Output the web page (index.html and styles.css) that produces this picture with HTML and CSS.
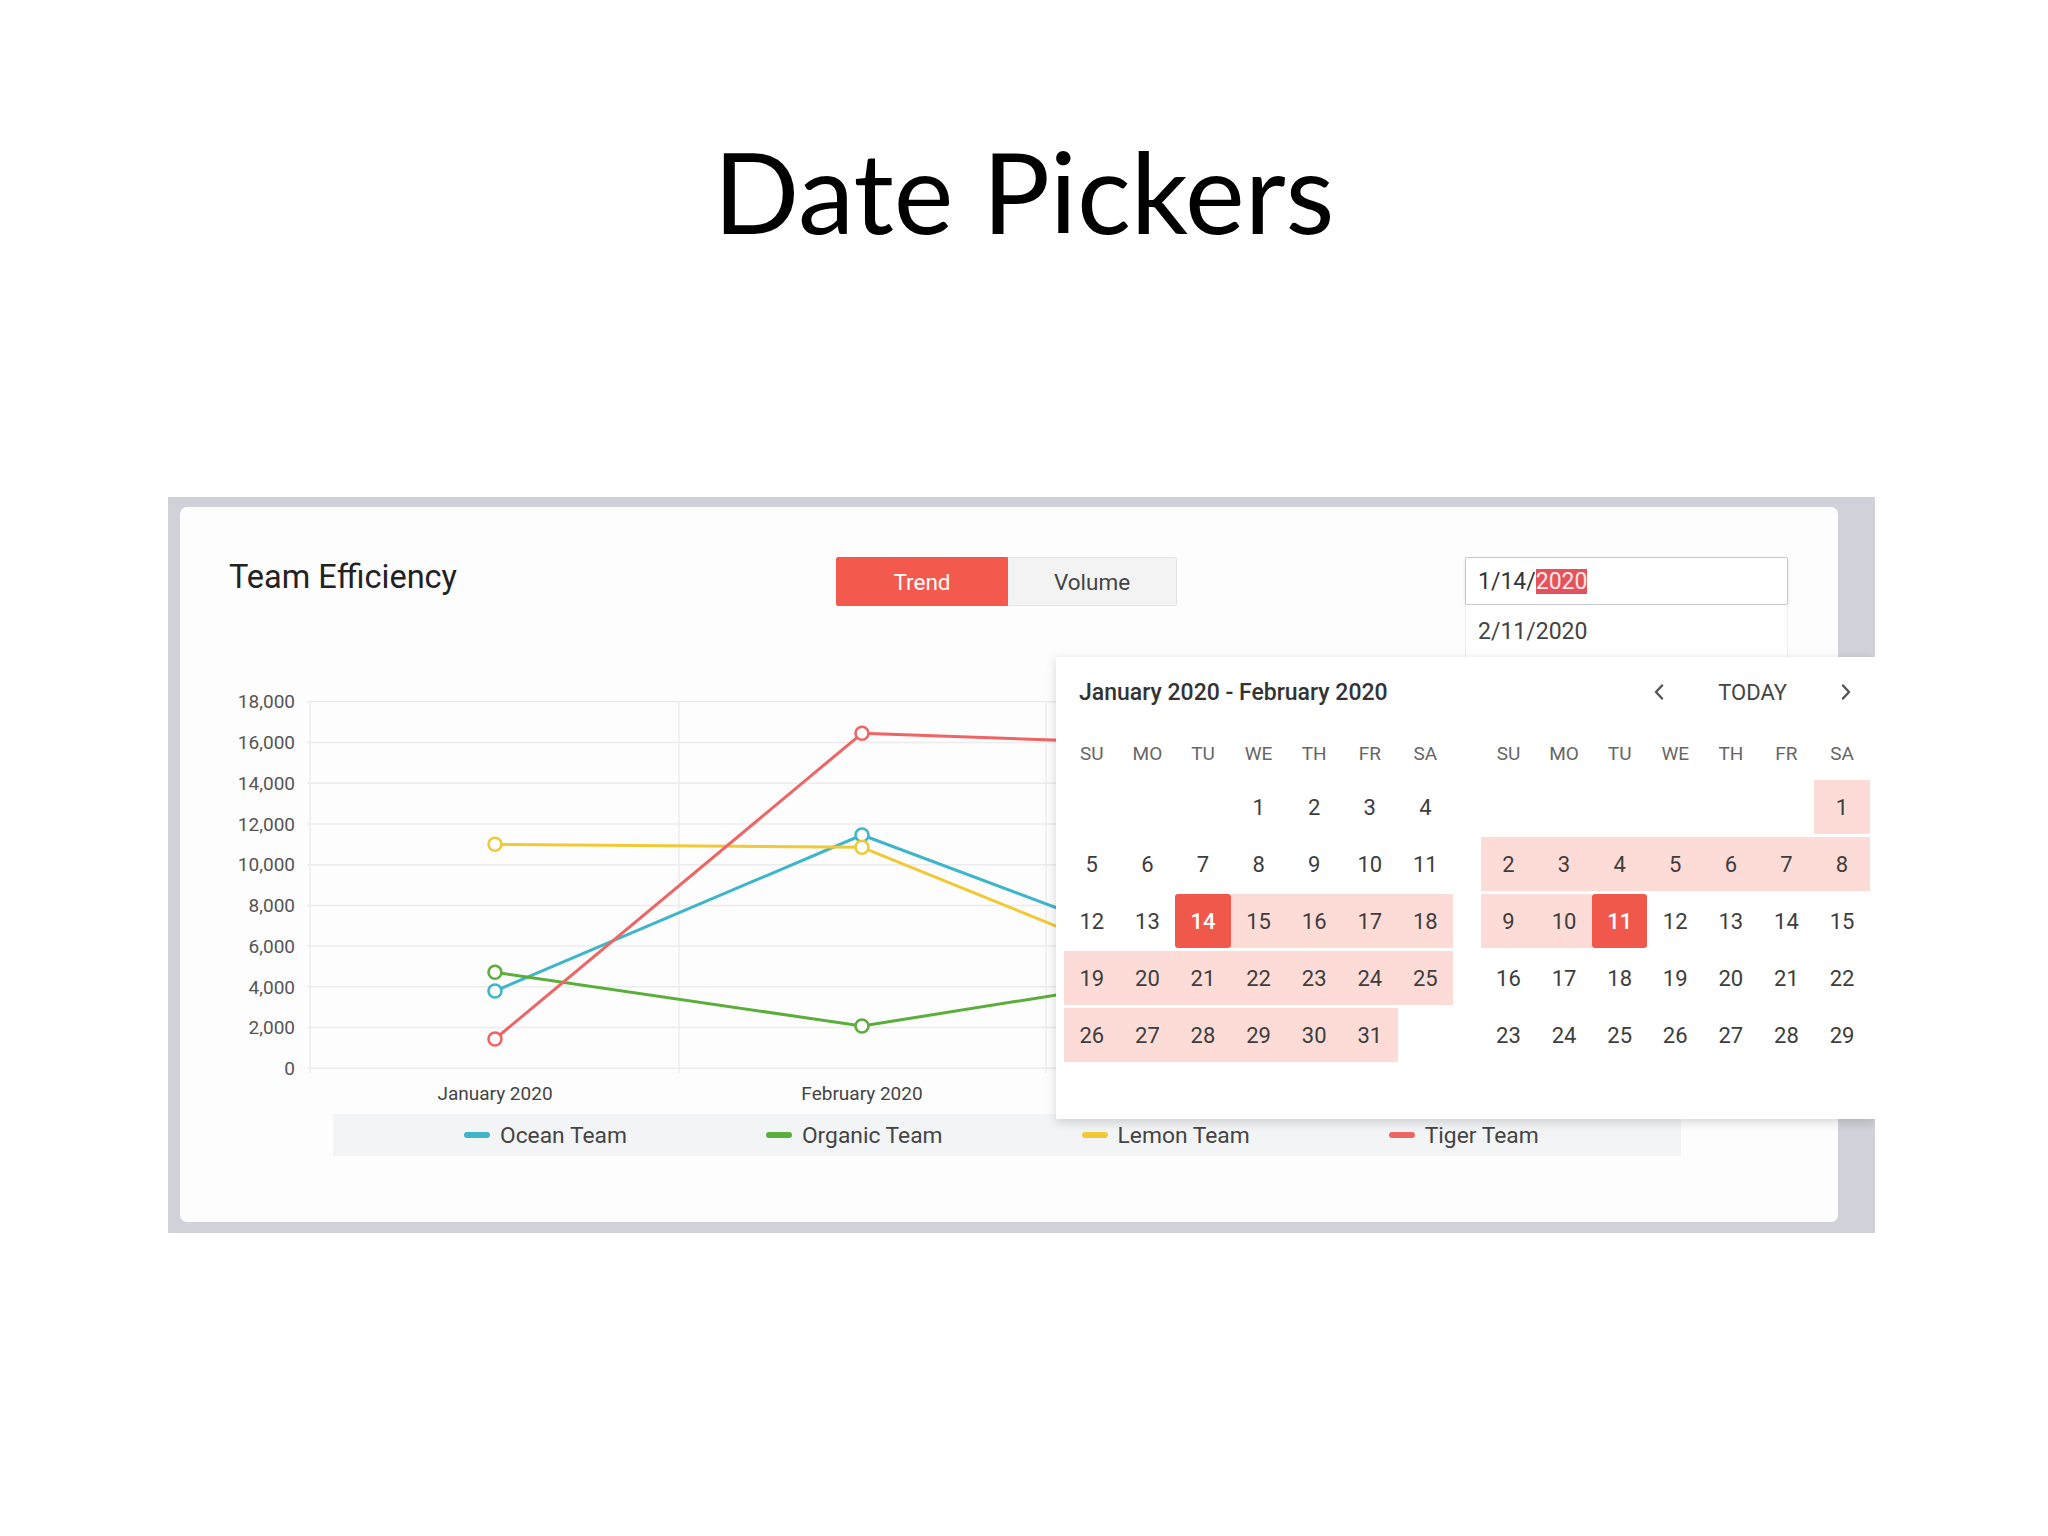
FILE: index.html
```html
<!DOCTYPE html>
<html lang="en">
<head>
<meta charset="utf-8">
<title>Date Pickers</title>
<link rel="stylesheet" href="styles.css">
</head>
<body>
<header class="slide-head">
  <h1 class="slide-title">Date Pickers</h1>
</header>

<div class="shot">
  <section class="card">
    <div class="card-head">
      <h2 class="card-title">Team Efficiency</h2>
      <div class="seg">
        <button class="seg-btn active">Trend</button>
        <button class="seg-btn">Volume</button>
      </div>
      <div class="dates">
        <div class="date-input focus">1/14/<span class="sel-text">2020</span></div>
        <div class="date-input second">2/11/2020</div>
      </div>
    </div>

    <svg class="chart" viewBox="0 0 1658 457" width="1658" height="457">
      <g class="grid">
        <line x1="127" y1="411.3" x2="1600" y2="411.3"/>
        <line x1="127" y1="370.6" x2="1600" y2="370.6"/>
        <line x1="127" y1="329.8" x2="1600" y2="329.8"/>
        <line x1="127" y1="289.1" x2="1600" y2="289.1"/>
        <line x1="127" y1="248.4" x2="1600" y2="248.4"/>
        <line x1="127" y1="207.7" x2="1600" y2="207.7"/>
        <line x1="127" y1="166.9" x2="1600" y2="166.9"/>
        <line x1="127" y1="126.2" x2="1600" y2="126.2"/>
        <line x1="127" y1="85.5" x2="1600" y2="85.5"/>
        <line x1="127" y1="44.7" x2="1600" y2="44.7"/>
        <line x1="130" y1="44.7" x2="130" y2="416"/>
        <line x1="499" y1="44.7" x2="499" y2="416"/>
        <line x1="866" y1="44.7" x2="866" y2="416"/>
        <line x1="1233" y1="44.7" x2="1233" y2="416"/>
        <line x1="1600" y1="44.7" x2="1600" y2="416"/>
      </g>
      <g class="ylab">
        <text x="115" y="418">0</text>
        <text x="115" y="377.3">2,000</text>
        <text x="115" y="336.5">4,000</text>
        <text x="115" y="295.8">6,000</text>
        <text x="115" y="255.1">8,000</text>
        <text x="115" y="214.4">10,000</text>
        <text x="115" y="173.6">12,000</text>
        <text x="115" y="132.9">14,000</text>
        <text x="115" y="92.2">16,000</text>
        <text x="115" y="51.4">18,000</text>
      </g>
      <g class="xlab">
        <text x="315" y="443">January 2020</text>
        <text x="682" y="443">February 2020</text>
        <text x="1049" y="443">March 2020</text>
        <text x="1416" y="443">April 2020</text>
      </g>
      <g class="series ocean">
        <polyline points="315,334 682,178 1049,315.5 1416,260"/>
        <circle cx="315" cy="334" r="6.5"/><circle cx="682" cy="178" r="6.5"/>
        <circle cx="1049" cy="315.5" r="6.5"/><circle cx="1416" cy="260" r="6.5"/>
      </g>
      <g class="series organic">
        <polyline points="315,315.3 682,369 1049,310.4 1416,290"/>
        <circle cx="315" cy="315.3" r="6.5"/><circle cx="682" cy="369" r="6.5"/>
        <circle cx="1049" cy="310.4" r="6.5"/><circle cx="1416" cy="290" r="6.5"/>
      </g>
      <g class="series lemon">
        <polyline points="315,187.3 682,190.3 1049,339.2 1416,200"/>
        <circle cx="315" cy="187.3" r="6.5"/><circle cx="682" cy="190.3" r="6.5"/>
        <circle cx="1049" cy="339.2" r="6.5"/><circle cx="1416" cy="200" r="6.5"/>
      </g>
      <g class="series tiger">
        <polyline points="315,382 682,76.3 1049,89 1416,120"/>
        <circle cx="315" cy="382" r="6.5"/><circle cx="682" cy="76.3" r="6.5"/>
        <circle cx="1049" cy="89" r="6.5"/><circle cx="1416" cy="120" r="6.5"/>
      </g>
    </svg>

    <div class="legend">
      <div class="legend-item"><span class="swatch ocean"></span>Ocean Team</div>
      <div class="legend-item"><span class="swatch organic"></span>Organic Team</div>
      <div class="legend-item"><span class="swatch lemon"></span>Lemon Team</div>
      <div class="legend-item"><span class="swatch tiger"></span>Tiger Team</div>
    </div>
  </section>

  <div class="picker">
    <div class="picker-head">
      <div class="picker-title">January 2020 - February 2020</div>
      <div class="picker-nav">
        <svg class="chev" viewBox="0 0 12 16" width="12" height="16"><polyline points="9,1.5 3,8 9,14.5"/></svg>
        <span class="today">TODAY</span>
        <svg class="chev" viewBox="0 0 12 16" width="12" height="16"><polyline points="3,1.5 9,8 3,14.5"/></svg>
      </div>
    </div>
    <div class="months">
      <div class="month">
        <div class="wk"><span>SU</span><span>MO</span><span>TU</span><span>WE</span><span>TH</span><span>FR</span><span>SA</span></div>
        <div class="days">
          <span></span><span></span><span></span><span>1</span><span>2</span><span>3</span><span>4</span>
          <span>5</span><span>6</span><span>7</span><span>8</span><span>9</span><span>10</span><span>11</span>
          <span>12</span><span>13</span><span class="sel">14</span><span class="in">15</span><span class="in">16</span><span class="in">17</span><span class="in">18</span>
          <span class="in">19</span><span class="in">20</span><span class="in">21</span><span class="in">22</span><span class="in">23</span><span class="in">24</span><span class="in">25</span>
          <span class="in">26</span><span class="in">27</span><span class="in">28</span><span class="in">29</span><span class="in">30</span><span class="in">31</span><span></span>
        </div>
      </div>
      <div class="month">
        <div class="wk"><span>SU</span><span>MO</span><span>TU</span><span>WE</span><span>TH</span><span>FR</span><span>SA</span></div>
        <div class="days">
          <span></span><span></span><span></span><span></span><span></span><span></span><span class="in">1</span>
          <span class="in">2</span><span class="in">3</span><span class="in">4</span><span class="in">5</span><span class="in">6</span><span class="in">7</span><span class="in">8</span>
          <span class="in">9</span><span class="in">10</span><span class="sel">11</span><span>12</span><span>13</span><span>14</span><span>15</span>
          <span>16</span><span>17</span><span>18</span><span>19</span><span>20</span><span>21</span><span>22</span>
          <span>23</span><span>24</span><span>25</span><span>26</span><span>27</span><span>28</span><span>29</span>
        </div>
      </div>
    </div>
  </div>
</div>
</body>
</html>
```

FILE: styles.css
```css
html, body {
  margin: 0;
  padding: 0;
  background: #ffffff;
}

body {
  width: 2048px;
  height: 1536px;
  overflow: hidden;
  font-family: Roboto, "Liberation Sans", sans-serif;
}

.slide-head {
  height: 497px;
  box-sizing: border-box;
  padding-top: 123px;
}

.slide-title {
  margin: 0;
  text-align: center;
  font-family: Lato, "Open Sans", sans-serif;
  font-weight: 400;
  font-size: 113px;
  line-height: 1.2;
  color: #000;
}

/* screenshot frame */
.shot {
  position: relative;
  margin-left: 168px;
  width: 1707px;
  height: 736px;
  box-sizing: border-box;
  padding: 10px 37px 11px 12px;
  background: #d1d1d9;
  overflow: hidden;
}

.card {
  width: 1658px;
  height: 715px;
  background: #fdfdfd;
  border-radius: 7px;
}

.card-head {
  display: grid;
  grid-template-columns: 607px 629px 323px;
  align-items: start;
  padding: 50px 0 0 49px;
  height: 150px;
  box-sizing: border-box;
}

.card-title {
  margin: 0;
  font-size: 32.5px;
  font-weight: 400;
  line-height: 40px;
  color: #222;
}

.seg {
  display: flex;
  height: 49px;
}

.seg-btn {
  border: 1px solid #e3e3e3;
  background: #f3f3f3;
  font-family: Roboto, "Liberation Sans", sans-serif;
  font-size: 22.5px;
  color: #444;
  padding: 0;
  margin: 0;
  height: 49px;
  width: 169px;
}

.seg-btn.active {
  width: 172px;
  background: #f35a4d;
  border-color: #f35a4d;
  color: #fff;
  border-radius: 2px 0 0 2px;
}

.seg-btn:last-child {
  border-left: none;
  border-radius: 0 2px 2px 0;
}

.dates {
  display: flex;
  flex-direction: column;
}

.date-input {
  display: flex;
  align-items: center;
  box-sizing: border-box;
  padding-left: 12px;
  font-size: 23px;
  color: #333;
  background: #fff;
}

.date-input.focus {
  height: 48px;
  border: 1px solid #c8c8c8;
  border-radius: 2px;
  box-shadow: 0 1px 3px rgba(0, 0, 0, 0.12);
}

.date-input.second {
  height: 52px;
  border-left: 1px solid #ececec;
  border-right: 1px solid #ececec;
  color: #444;
}

.sel-text {
  background: #e4525b;
  color: #fde8e8;
  line-height: 25px;
}

/* chart */
.chart {
  display: block;
}

.grid line {
  stroke: #ececee;
  stroke-width: 1.5;
}

.ylab text {
  font-family: Roboto, "Liberation Sans", sans-serif;
  font-size: 19px;
  fill: #555;
  text-anchor: end;
}

.xlab text {
  font-family: Roboto, "Liberation Sans", sans-serif;
  font-size: 19px;
  fill: #444;
  text-anchor: middle;
}

.series polyline {
  fill: none;
  stroke-width: 3;
  stroke-linejoin: round;
}

.series circle {
  fill: #fff;
  stroke-width: 2.6;
}

.series.ocean polyline, .series.ocean circle { stroke: #3fb5c9; }
.series.organic polyline, .series.organic circle { stroke: #5bae3a; }
.series.lemon polyline, .series.lemon circle { stroke: #f0c935; }
.series.tiger polyline, .series.tiger circle { stroke: #ef6464; }

/* legend */
.legend {
  display: flex;
  align-items: center;
  gap: 139px;
  margin-left: 153px;
  width: 1348px;
  height: 42px;
  box-sizing: border-box;
  padding-left: 131px;
  background: #f3f4f6;
}

.legend-item {
  display: flex;
  align-items: center;
  font-size: 22.8px;
  color: #444;
}

.swatch {
  display: inline-block;
  width: 26px;
  height: 6px;
  border-radius: 3px;
  margin-right: 10px;
}

.swatch.ocean { background: #3fb5c9; }
.swatch.organic { background: #5bae3a; }
.swatch.lemon { background: #f0c935; }
.swatch.tiger { background: #ef6464; }

/* date picker popup */
.picker {
  position: absolute;
  left: 888px;
  top: 160px;
  width: 819px;
  height: 462px;
  background: #fff;
  box-shadow: 0 3px 10px rgba(0, 0, 0, 0.16);
}

.picker-head {
  display: flex;
  align-items: center;
  height: 70px;
  padding: 0 23px 0 23px;
}

.picker-title {
  font-size: 23px;
  font-weight: 500;
  color: #333;
}

.picker-nav {
  margin-left: auto;
  display: flex;
  align-items: center;
}

.chev polyline {
  fill: none;
  stroke: #555;
  stroke-width: 2.4;
  stroke-linecap: round;
  stroke-linejoin: round;
}

.today {
  margin: 0 53px;
  font-size: 22px;
  color: #444;
}

.months {
  display: flex;
  gap: 27.5px;
  padding-left: 8px;
  margin-top: 6px;
}

.wk, .days {
  display: grid;
  grid-template-columns: repeat(7, 55.6px);
}

.wk {
  height: 40px;
  align-items: center;
  justify-items: center;
  font-size: 19px;
  color: #666;
}

.days {
  margin-top: 7px;
  grid-auto-rows: 54px;
  row-gap: 3px;
}

.days span {
  display: flex;
  align-items: center;
  justify-content: center;
  font-size: 22px;
  color: #3d3d3d;
}

.days .in {
  background: #fddcd8;
}

.days .sel {
  background: #f1584c;
  color: #fff;
  font-weight: 500;
  border-radius: 3px;
}
```
